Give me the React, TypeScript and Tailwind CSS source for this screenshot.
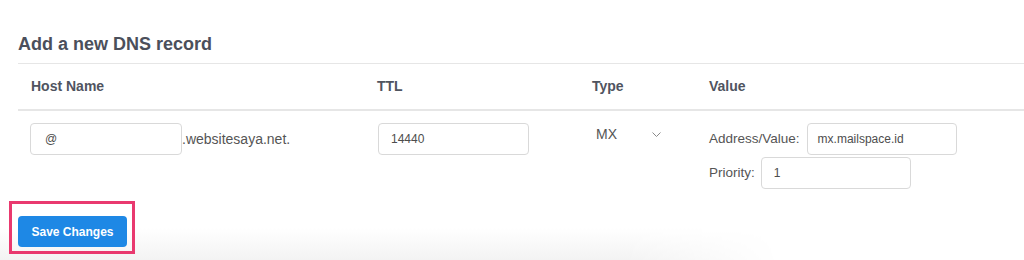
import React from 'react';

const font = { fontFamily: '"Liberation Sans", Arial, sans-serif' };

function TextInput({ value, className = '' }: { value: string; className?: string }) {
  return (
    <div
      className={`h-[32px] rounded-[4px] border border-[#d9d9d9] bg-white flex items-center text-[12px] text-[#4d4d4d] ${className}`}
    >
      {value}
    </div>
  );
}

export default function App() {
  return (
    <div className="relative w-[1024px] h-[260px] overflow-hidden bg-white" style={font}>
      {/* soft shadow at the bottom of the card */}
      <div className="absolute left-0 bottom-0 w-[780px] h-[32px] bg-gradient-to-b from-white to-[#f3f3f3] [mask-image:linear-gradient(to_right,black_80%,transparent)]" />

      <div className="relative pt-[32px] pl-[18px]">
        <h2 className="h-[24px] leading-[24px] text-[18px] font-bold text-[#4b4f5b]">Add a new DNS record</h2>

        <div className="mt-[7px] border-t border-[#e6e6e6]">
          {/* header row */}
          <div className="grid grid-cols-[346px_215px_117px_1fr] h-[47px] items-center border-b-2 border-[#e6e6e6] text-[14px] font-bold text-[#50545f]">
            <div className="pl-[13px]">Host Name</div>
            <div className="pl-[13px]">TTL</div>
            <div className="pl-[13px]">Type</div>
            <div className="pl-[13px]">Value</div>
          </div>

          {/* record row */}
          <div className="grid grid-cols-[346px_215px_117px_1fr] pt-[12px] text-[#555]">
            <div className="pl-[12px] flex items-center self-start">
              <TextInput value="@" className="w-[152px] pl-[14px]" />
              <span className="text-[14px]">.websitesaya.net.</span>
            </div>
            <div className="pl-[14px] self-start">
              <TextInput value="14440" className="w-[151px] pl-[12px]" />
            </div>
            <div className="pl-[17px] self-start flex items-center h-[22px]">
              <span className="text-[14px] text-[#555]">MX</span>
              <svg className="ml-[35px] mt-[1px]" width="9" height="5" viewBox="0 0 9 5" fill="none">
                <path d="M0.5 0.5L4.5 4.5L8.5 0.5" stroke="#8a8a8a" strokeWidth="1" />
              </svg>
            </div>
            <div className="pl-[13px] flex flex-col gap-[2px] text-[13.5px]">
              <div className="flex items-center">
                <span>Address/Value:</span>
                <TextInput value="mx.mailspace.id" className="ml-[7px] w-[150px] pl-[10px]" />
              </div>
              <div className="flex items-center">
                <span>Priority:</span>
                <TextInput value="1" className="ml-[6px] w-[150px] h-[31px] pl-[12px]" />
              </div>
            </div>
          </div>
        </div>

        <button className="mt-[27px] w-[109px] h-[31px] rounded-[4px] bg-[#1e88e5] text-white text-[12px] font-bold">
          Save Changes
        </button>
      </div>

      {/* highlight annotation around the button */}
      <div className="absolute left-[9px] top-[201px] w-[126px] h-[53px] border-[3px] border-[#e9396f]" />
    </div>
  );
}
